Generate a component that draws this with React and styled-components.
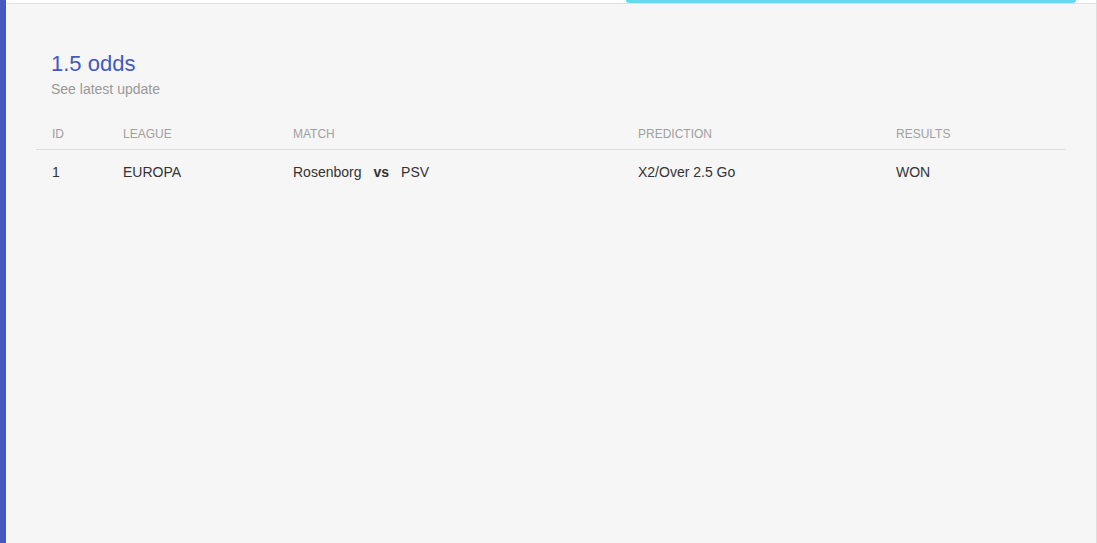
import React from 'react';
import styled, { createGlobalStyle } from 'styled-components';

const GlobalStyle = createGlobalStyle`
  html, body {
    margin: 0;
    padding: 0;
    height: 100%;
    background: #f6f6f6;
    font-family: "Liberation Sans", Arial, sans-serif;
  }
  #root {
    height: 100%;
  }
`;

const rows = [
  { id: 1, league: 'EUROPA', home: 'Rosenborg', away: 'PSV', prediction: 'X2/Over 2.5 Go', result: 'WON' },
];

const columns = [
  { key: 'id', label: 'ID', width: '71px' },
  { key: 'league', label: 'LEAGUE', width: '170px' },
  { key: 'match', label: 'MATCH', width: '345px' },
  { key: 'prediction', label: 'PREDICTION', width: '258px' },
  { key: 'result', label: 'RESULTS', width: 'auto' },
];

const App = () => {
  return (
    <>
      <GlobalStyle />
      <Page>
        <SideStrip />
        <Main>
          <TopBar>
            <TabIndicator />
          </TopBar>
          <Content>
            <Heading>
              <Title>1.5 odds</Title>
              <Subtitle>See latest update</Subtitle>
            </Heading>
            <Table>
              <colgroup>
                {columns.map((c) => (
                  <col key={c.key} style={{ width: c.width }} />
                ))}
              </colgroup>
              <thead>
                <tr>
                  {columns.map((c) => (
                    <Th key={c.key}>{c.label}</Th>
                  ))}
                </tr>
              </thead>
              <tbody>
                {rows.map((r) => (
                  <tr key={r.id}>
                    <Td>{r.id}</Td>
                    <Td>{r.league}</Td>
                    <Td>
                      {r.home}
                      <Vs>vs</Vs>
                      {r.away}
                    </Td>
                    <Td>{r.prediction}</Td>
                    <Td>{r.result}</Td>
                  </tr>
                ))}
              </tbody>
            </Table>
          </Content>
        </Main>
      </Page>
    </>
  );
};

const Page = styled.div`
  display: flex;
  height: 543px;
  background: #f6f6f6;
`;

const SideStrip = styled.div`
  width: 6px;
  flex-shrink: 0;
  background: #4359c1;
`;

const Main = styled.div`
  flex: 1;
  display: flex;
  flex-direction: column;
  border-right: 1px solid #dedede;
`;

const TopBar = styled.div`
  position: relative;
  height: 3px;
  background: #ffffff;
  border-bottom: 1px solid #e0e0e0;
`;

const TabIndicator = styled.div`
  position: absolute;
  top: 0;
  left: 620px;
  width: 450px;
  height: 3px;
  background: #66d9ef;
  border-radius: 0 0 3px 3px;
`;

const Content = styled.div`
  padding: 47px 30px 0 30px;
`;

const Heading = styled.div`
  display: flex;
  flex-direction: column;
  gap: 4px;
  padding: 0 15px;
  margin-bottom: 24px;
`;

const Title = styled.h2`
  margin: 0;
  font-size: 22px;
  line-height: 26px;
  font-weight: 400;
  color: #4359c1;
`;

const Subtitle = styled.div`
  font-size: 14px;
  line-height: 16px;
  color: #999999;
`;

const Table = styled.table`
  width: 100%;
  max-width: 1030px;
  border-collapse: collapse;
  table-layout: fixed;
`;

const Th = styled.th`
  text-align: left;
  font-weight: 400;
  font-size: 12px;
  line-height: 14px;
  color: #a0a0a0;
  padding: 6px 16px 8px;
  border-bottom: 1px solid #dddddd;
`;

const Td = styled.td`
  font-size: 14px;
  line-height: 16px;
  color: #333333;
  padding: 14px 16px;
  white-space: nowrap;
`;

const Vs = styled.b`
  font-weight: 700;
  margin: 0 12px;
`;

export default App;
